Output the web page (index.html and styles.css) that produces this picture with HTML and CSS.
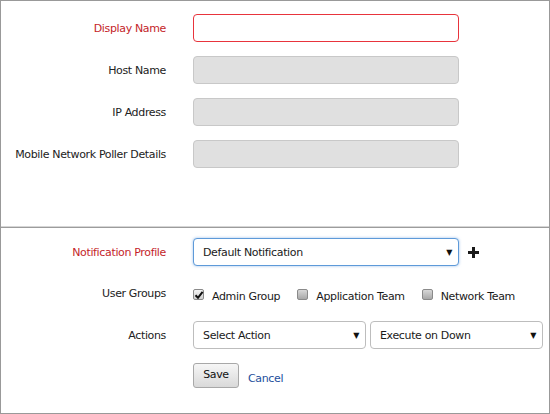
FILE: index.html
```html
<!DOCTYPE html>
<html lang="en">
<head>
    <meta charset="UTF-8">
    <title>Add Monitor</title>
    <link rel="stylesheet" href="styles.css">
</head>
<body>
    <div class="panel">
        <!-- Monitor details -->
        <div class="section top">
            <div class="row">
                <label class="label required">Display Name</label>
                <div class="field input error"></div>
            </div>
            <div class="row">
                <label class="label">Host Name</label>
                <div class="field input disabled"></div>
            </div>
            <div class="row">
                <label class="label">IP Address</label>
                <div class="field input disabled"></div>
            </div>
            <div class="row">
                <label class="label">Mobile Network Poller Details</label>
                <div class="field input disabled"></div>
            </div>
        </div>

        <!-- Alarm settings -->
        <div class="section bottom">
            <div class="row">
                <label class="label required">Notification Profile</label>
                <div class="field select focus">
                    <span>Default Notification</span>
                    <span class="arrow">&#9660;</span>
                </div>
                <svg class="plus" width="11" height="11" viewBox="0 0 11 11">
                    <rect x="4" y="0" width="3" height="11" fill="#1a1a1a"/>
                    <rect x="0" y="4" width="11" height="3" fill="#1a1a1a"/>
                </svg>
            </div>
            <div class="row groups">
                <label class="label">User Groups</label>
                <div class="checks">
                    <span class="check-item">
                        <span class="box checked">
                            <svg width="10" height="10" viewBox="0 0 10 10"><path d="M1.5 5.2 L4 7.8 L8.6 1.8" fill="none" stroke="#111" stroke-width="2"/></svg>
                        </span>
                        Admin Group
                    </span>
                    <span class="check-item">
                        <span class="box"></span>
                        Application Team
                    </span>
                    <span class="check-item">
                        <span class="box"></span>
                        Network Team
                    </span>
                </div>
            </div>
            <div class="row">
                <label class="label">Actions</label>
                <div class="selects">
                    <div class="select small">
                        <span>Select Action</span>
                        <span class="arrow">&#9660;</span>
                    </div>
                    <div class="select small">
                        <span>Execute on Down</span>
                        <span class="arrow">&#9660;</span>
                    </div>
                </div>
            </div>
            <div class="row buttons">
                <span class="label"></span>
                <button class="btn">Save</button>
                <a href="#" class="cancel">Cancel</a>
            </div>
        </div>
    </div>
</body>
</html>
```

FILE: styles.css
```css
html, body {
    margin: 0;
    padding: 0;
    background: #fff;
}
body {
    font-family: "DejaVu Sans", Verdana, sans-serif;
    font-size: 11px;
    letter-spacing: -0.35px;
    color: #222;
}
.panel {
    width: 550px;
    height: 414px;
    box-sizing: border-box;
    border: 1px solid #999;
}
.section.top {
    padding-top: 13px;
    height: 227px;
    box-sizing: border-box;
    border-bottom: 1px solid #9c9c9c;
    box-shadow: 0 -1px 0 #d6d6d6 inset;
}
.section.bottom {
    padding-top: 10px;
}
.row {
    display: flex;
    align-items: center;
    height: 28px;
    margin-bottom: 14px;
}
.label {
    width: 165px;
    flex: none;
    text-align: right;
    margin-right: 27px;
}
.label.required {
    color: #c41e2a;
}
.field {
    width: 266px;
    height: 28px;
    box-sizing: border-box;
    border-radius: 4px;
}
.input.error {
    border: 1px solid #e8343c;
    background: #fff;
}
.input.disabled {
    border: 1px solid #c8c8c8;
    background: #e0e0e0;
}
.select {
    display: flex;
    align-items: center;
    justify-content: space-between;
    padding: 0 6px 0 9px;
    box-sizing: border-box;
    background: #fff;
    color: #1a1a1a;
}
.select.focus {
    border: 1px solid #5e9ad9;
    box-shadow: 0 0 3px rgba(90, 150, 220, 0.6);
}
.arrow {
    font-size: 8px;
    color: #111;
}
.plus {
    margin-left: 9px;
}
.groups {
    margin-bottom: 13px;
}
.groups .label {
    align-self: flex-start;
    margin-top: 7px;
}
.checks {
    display: flex;
    align-items: center;
    margin-top: 5px;
}
.check-item {
    display: flex;
    align-items: center;
    color: #1a1a1a;
    margin-right: 17px;
}
.box {
    width: 9px;
    height: 9px;
    border: 1px solid #8a8a8a;
    border-radius: 2px;
    background: linear-gradient(#d8d8d8, #a8a8a8);
    margin-right: 8px;
    position: relative;
    top: -2px;
}
.box.checked {
    background: linear-gradient(#f4f4f4, #d0d0d0);
}
.box svg {
    display: block;
}
.selects {
    display: flex;
    gap: 4px;
}
.select.small {
    width: 173px;
    height: 28px;
    border: 1px solid #bdbdbd;
    border-radius: 4px;
}
.buttons {
    margin-top: 1px;
    height: 25px;
}
.btn {
    width: 46px;
    height: 25px;
    font-family: inherit;
    font-size: 11px;
    letter-spacing: -0.35px;
    color: #111;
    border: 1px solid #a8a8a8;
    border-radius: 3px;
    background: linear-gradient(#f6f6f6, #d9d9d9);
    padding: 0 0 3px;
}
.cancel {
    color: #1d4f9c;
    text-decoration: none;
    margin-left: 9px;
    margin-top: 6px;
}
```
